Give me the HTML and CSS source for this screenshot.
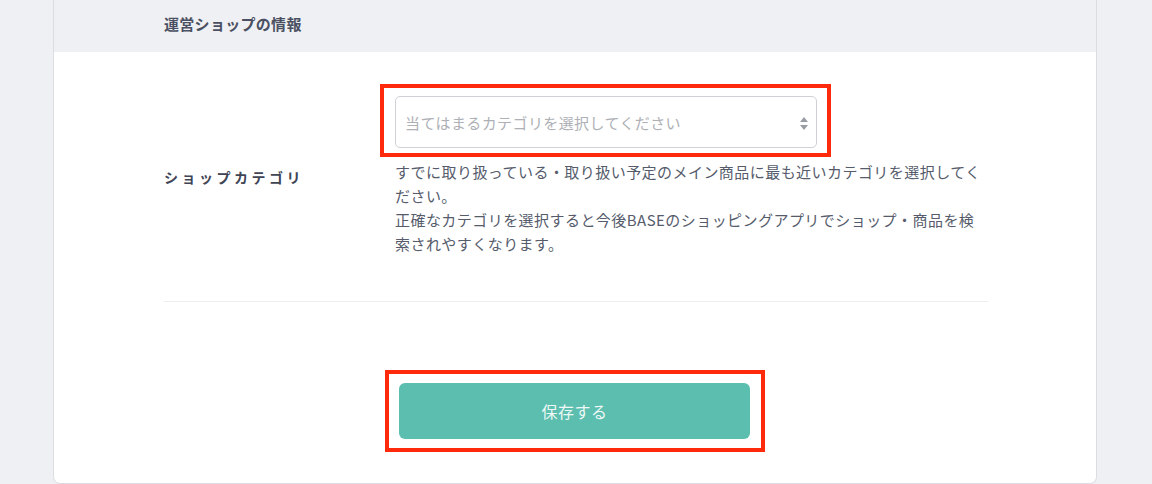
FILE: index.html
```html
<!DOCTYPE html>
<html lang="ja">
<head>
<meta charset="utf-8">
<link rel="stylesheet" href="styles.css">
</head>
<body>
<div class="page">
  <section class="card">
    <header class="card-head">運営ショップの情報</header>
    <div class="card-body">
      <div class="row">
        <div class="label">ショップカテゴリ</div>
        <div class="field">
          <div class="select-wrap mark">
            <div class="select">
              <span class="placeholder">当てはまるカテゴリを選択してください</span>
              <svg class="arrows" width="8" height="13" viewBox="0 0 8 13"><path d="M4 0 L8 5 L0 5 Z M0 8 L8 8 L4 13 Z" fill="#9a9da4"/></svg>
            </div>
          </div>
          <p class="help">すでに取り扱っている・取り扱い予定のメイン商品に最も近いカテゴリを選択してください。<br>正確なカテゴリを選択すると今後BASEのショッピングアプリでショップ・商品を検索されやすくなります。</p>
        </div>
      </div>
      <div class="actions">
        <div class="btn-wrap mark2">
          <button class="btn">保存する</button>
        </div>
      </div>
    </div>
  </section>
</div>
</body>
</html>
```

FILE: styles.css
```css
* { box-sizing: border-box; }
html, body { margin: 0; padding: 0; }
body {
  background: #eff0f4;
  font-family: "Noto Sans CJK JP", "Noto Sans", sans-serif;
  width: 1152px;
  height: 484px;
  overflow: hidden;
}
.page {
  padding-left: 53px;
}
.card {
  width: 1044px;
  height: 484px;
  border: 1px solid #dcdde2;
  border-top: none;
  border-radius: 0 0 7px 7px;
  background: #fff;
  overflow: hidden;
}
.card-head {
  height: 52px;
  background: #eff0f4;
  padding-left: 110px;
  font-size: 15px;
  font-weight: 700;
  letter-spacing: 0.3px;
  color: #4a5062;
  line-height: 47px;
}
.card-body {
  padding: 0 108px 0 110px;
}
.row {
  display: flex;
  align-items: center;
  padding: 44px 0 45px;
  border-bottom: 1px solid #eceef0;
}
.label {
  width: 231px;
  flex: none;
  font-size: 14px;
  font-weight: 700;
  letter-spacing: 3.5px;
  color: #3f4555;
  padding-top: 1px;
}
.field {
  width: 592px;
}
.select-wrap { position: relative; width: 422px; }
.mark::after {
  content: "";
  position: absolute;
  left: -15px; right: -14px; top: -12px; bottom: -9px;
  border: 4px solid #ff2a0c;
  pointer-events: none;
}
.select {
  height: 52px;
  border: 1px solid #cfd1d6;
  border-radius: 5px;
  display: flex;
  align-items: center;
  justify-content: space-between;
  padding: 0 8px 0 9px;
}
.placeholder {
  font-size: 15px;
  color: #aeb0b5;
  letter-spacing: 0.4px;
}
.arrows { margin-top: 2px; }
.help {
  margin: 12px 0 0;
  width: 586px;
  font-size: 15px;
  line-height: 24px;
  letter-spacing: 0.45px;
  color: #555b6b;
}
.actions {
  display: flex;
  padding-top: 81px;
  padding-left: 235px;
}
.btn-wrap { position: relative; }
.mark2::after {
  content: "";
  position: absolute;
  left: -14px; right: -15px; top: -13px; bottom: -13px;
  border: 4px solid #ff2a0c;
  pointer-events: none;
}
.btn {
  display: block;
  width: 351px;
  height: 56px;
  border: none;
  border-radius: 6px;
  background: #5bbeae;
  color: #eef8f6;
  font-family: inherit;
  font-size: 16px;
  letter-spacing: 0.5px;
}
```
